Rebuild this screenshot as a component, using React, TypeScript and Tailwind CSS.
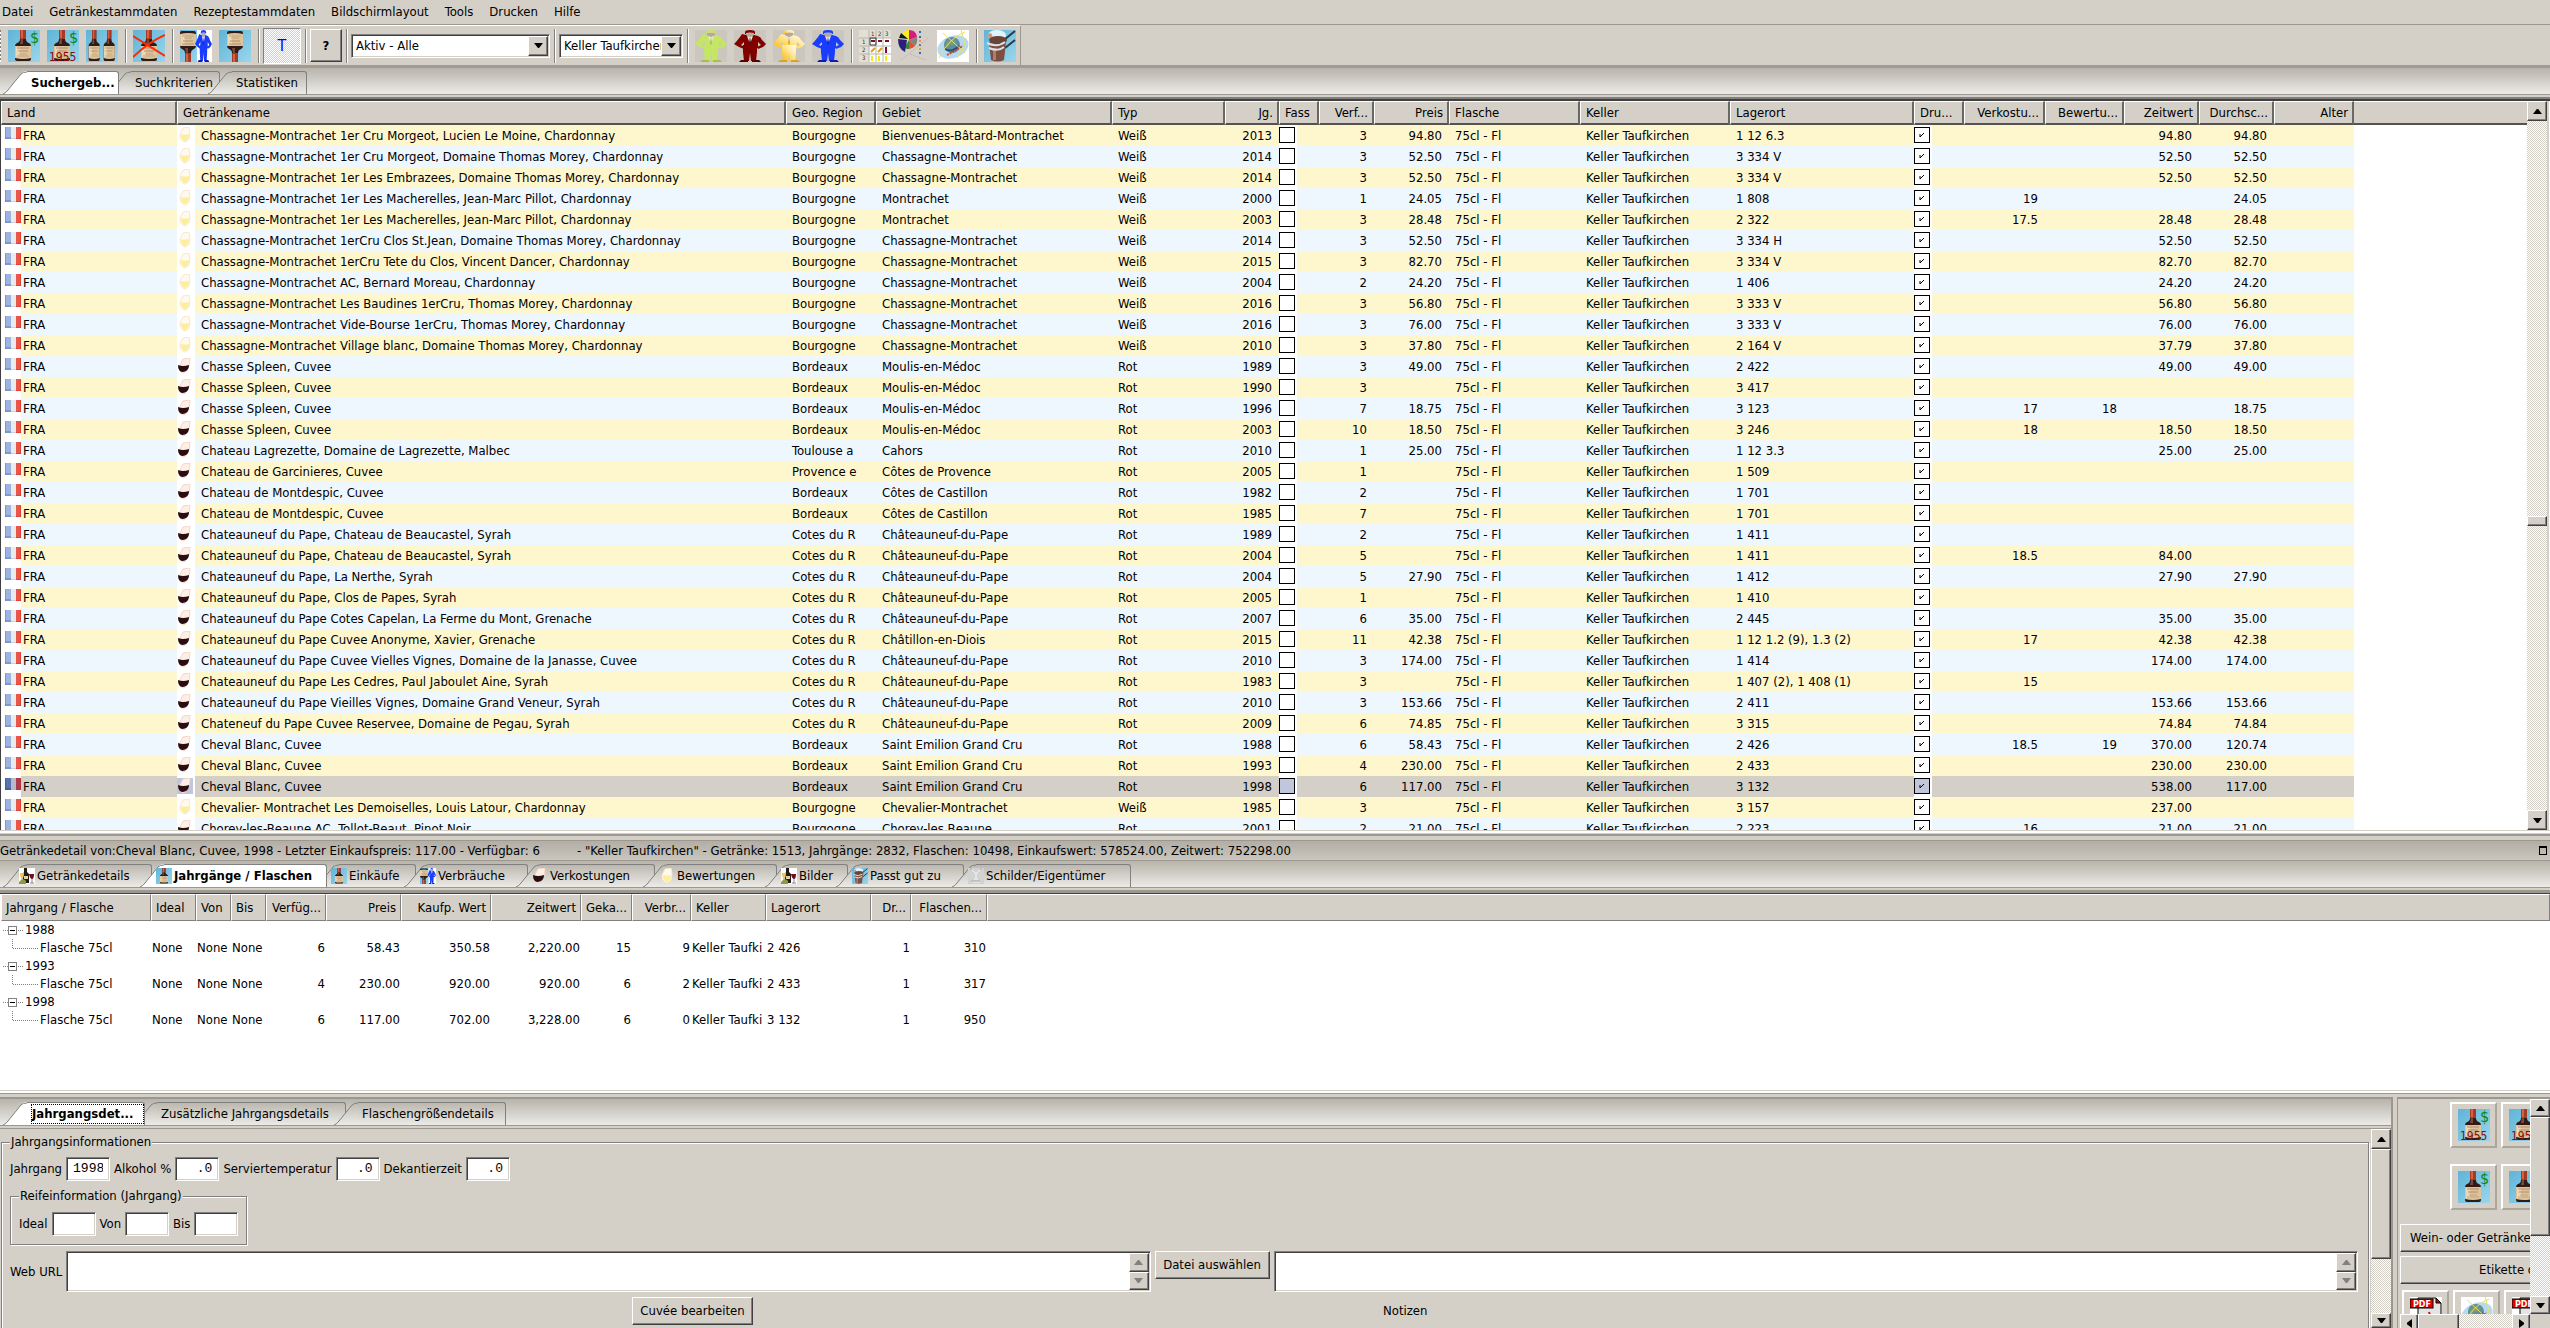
import React from 'react';

const RAISED =
  'bg-[#d4d0c8] border border-t-white border-l-white border-r-[#404040] border-b-[#404040] shadow-[inset_-1px_-1px_0_#808080]';
const SUNKEN =
  'bg-white border border-t-[#808080] border-l-[#808080] border-r-white border-b-white shadow-[inset_1px_1px_0_#404040,inset_-1px_-1px_0_#d4d0c8]';
const DITHER = 'bg-[repeating-conic-gradient(#ffffff_0_25%,#d4d0c8_0_50%)] bg-[length:2px_2px]';
const STRIP = 'bg-gradient-to-b from-[#b8b4ab] to-[#ecebe7]';

/* ---------- Icons ---------- */

type IconProps = { size?: string };

function Bottle({ x = 0, flip = false }: { x?: number; flip?: boolean }) {
  return (
    <g transform={flip ? `translate(${x} 32) scale(1 -1)` : `translate(${x} 0)`}>
      <path d="M13 0h6v9q0 3 3 4 2 1 2 3v13q0 2-2 2H10q-2 0-2-2V16q0-2 2-3 3-1 3-4z" fill="#2f1b17" />
      <path d="M13 0h6v9h-6z" fill="#a53a28" />
      <path d="M14 0h2v8h-2z" fill="#d8603f" />
      <path d="M14 9h2v5h-3z" fill="#7a4636" />
      <path d="M8 16h16v12q-8 2-16 0z" fill="#dcc39b" />
      <path d="M9 17h4v10H9z" fill="#ecd8b4" />
      <path d="M10 18h12M11 21h10" stroke="#b78a6c" />
      <path d="M12 24h8M10 26h12" stroke="#c4a67c" />
    </g>
  );
}

function BottleIcon({
  size = 'size-8',
  dollar,
  year,
  cross,
  flip
}: IconProps & { dollar?: boolean; year?: boolean; cross?: boolean; flip?: boolean }) {
  return (
    <svg className={`${size} block shrink-0`} viewBox="0 0 32 32">
      <rect width="32" height="32" fill="url(#sky)" />
      <Bottle x={dollar ? -1 : 0} flip={flip} />
      {dollar && (
        <text x="22" y="13" fontSize="16" fill="#0a8a24" fontFamily="DejaVu Sans Condensed, sans-serif">$</text>
      )}
      {year && (
        <text x="2" y="31" fontSize="12" fill="#8b0a0a" fontFamily="DejaVu Sans Condensed, sans-serif">1955</text>
      )}
      {cross && <path d="M0 6L32 26M32 5Q16 12 0 27" stroke="#ff2a00" strokeWidth="2" fill="none" />}
    </svg>
  );
}

function TwoBottlesIcon() {
  return (
    <svg className="block size-8 shrink-0" viewBox="0 0 32 32">
      <rect width="32" height="32" fill="url(#sky)" />
      <g transform="translate(-3 0) scale(.7 1)"><Bottle /></g>
      <g transform="translate(12 0) scale(.7 1)"><Bottle /></g>
    </svg>
  );
}

function Man({ color, shade }: { color: string; shade: string }) {
  return (
    <g>
      <path d="M11 2q0-2 5-2t5 2v2h-1V3q-4-1-8 0v1h-1z" fill={color} />
      <path d="M12 3h8v3q-1 2-4 2t-4-2z" fill="#b9a79b" />
      <path d="M8 4l4 1 4 3 4-3 4 1q3 1 4 4l4 4-3 3-5 2-1-2 4-2-3-3v6H10v-6l-3 3 4 2-1 2-5-2-5-3 2-2 4-5z" fill={color} />
      <path d="M9 15h14v7l-1 9h-5l-1-8-1 8h-5l-1-9z" fill={color} />
      <path d="M13 6l3 8 3-8-3 1z" fill="#e8e4dc" />
      <path d="M16 7l1 6-1 2-1-2z" fill={shade} />
      <path d="M7 30h7v2H5zM18 30h7l2 2h-9z" fill={shade} />
    </g>
  );
}

function ManIcon({ color, shade }: { color: string; shade: string }) {
  return (
    <svg className="block size-8 shrink-0" viewBox="0 0 32 32">
      <rect width="32" height="32" fill="#cbc7be" />
      <Man color={color} shade={shade} />
    </svg>
  );
}

function BottleManIcon({ size = 'size-8' }: IconProps) {
  return (
    <svg className={`${size} block shrink-0`} viewBox="0 0 32 32">
      <rect width="32" height="32" fill="#ffffff" />
      <rect width="17" height="32" fill="url(#sky)" />
      <Bottle x={-8} flip />
      <g transform="translate(15 0) scale(.53 1)"><Man color="#1a3cff" shade="#0a1fb0" /></g>
    </svg>
  );
}

function GridIcon() {
  return (
    <svg className="block size-8 shrink-0" viewBox="0 0 32 32">
      <rect width="32" height="32" fill="#ffffff" />
      <path d="M0 0h32v8H0zM0 8h10v24H0z" fill="#e2dfd4" />
      <path d="M10 0v32M17 0v32M24 0v32M0 8h32M0 16h32M0 24h32" stroke="#b8b4a8" />
      <path d="M11 8h6v7h-6z" fill="none" stroke="#333" />
      <path d="M12 11h4M19 11h4M26 11h4" stroke="#7a0f35" strokeWidth="2" />
      <path d="M12 22l4-4M19 22l4-4" stroke="#e79a1c" strokeWidth="2" />
      <path d="M27 17v6" stroke="#7a0f35" strokeWidth="2" />
      <path d="M13 26v5M20 26v5M27 26v5" stroke="#f2e61c" strokeWidth="2" />
      <g fontSize="6" fill="#333" fontFamily="DejaVu Sans Condensed, sans-serif">
        <text x="12" y="6">1</text>
        <text x="19" y="6">2</text>
        <text x="26" y="6">3</text>
        <text x="3" y="14">1</text>
        <text x="3" y="22">2</text>
        <text x="3" y="30">3</text>
      </g>
    </svg>
  );
}

function PieIcon() {
  return (
    <svg className="block size-8 shrink-0" viewBox="0 0 32 32">
      <path d="M11 10L4 4Q7 0 11 0z" fill="#f5ee17" />
      <path d="M11 10V0q7 0 8 7z" fill="#d91a7d" />
      <path d="M11 10l8-3q1 5-2 9z" fill="#8a8078" />
      <path d="M11 10l6 6q-3 3-6 3z" fill="#e2502b" />
      <path d="M11 10v9q-4 0-4-2z" fill="#2a8c3a" />
      <path d="M9 10l-2 12Q0 19 0 9z" fill="#2c1e7a" />
      <path d="M10 9L3 3 1 8z" fill="#15151a" />
      <path d="M22 1v2M22 6v2M22 14v2M22 22v2" stroke="#3768b8" strokeWidth="2" />
      <path d="M22 10v2M22 18v2" stroke="#e2a02b" strokeWidth="2" />
      <path d="M3 30L30 8M12 24l16 6" stroke="#bfb6b6" strokeDasharray="2 1" />
    </svg>
  );
}

function GlobeIcon() {
  return (
    <svg className="block size-8 shrink-0" viewBox="0 0 32 32">
      <rect width="32" height="32" fill="#ffffff" />
      <ellipse cx="16" cy="17" rx="16" ry="11" fill="#b5d9f0" transform="rotate(-20 16 17)" />
      <circle cx="15" cy="15" r="8" fill="#5b8ea0" />
      <path d="M9 12q5-5 11-1-2 5-7 4-2 5-4 1z" fill="#7a9c70" />
      <path d="M8 19q7 4 14-3" stroke="#274f73" strokeWidth="2" fill="none" />
      <path d="M10 25l16-9" stroke="#c0452d" strokeWidth="2" strokeDasharray="2 1" />
      <path d="M2 28Q12 8 28 2M6 3l22 20M24 0l4 14-8 14" stroke="#eadf62" fill="none" />
    </svg>
  );
}

function PotIcon({ size = 'size-8' }: IconProps) {
  return (
    <svg className={`${size} block shrink-0`} viewBox="0 0 32 32">
      <rect width="32" height="32" fill="url(#sky)" />
      <ellipse cx="13" cy="5" rx="9" ry="5" fill="#dff1fa" />
      <path d="M3 4l4-1 4 8-3 2z" fill="#c69a78" />
      <path d="M20 10L31 1M21 18l10-8" stroke="#2c3a45" strokeWidth="2" />
      <path d="M5 12h17l-2 18q-6 3-13 0z" fill="#7d4f42" />
      <path d="M9 18h3v12H9z" fill="#b07d68" />
      <ellipse cx="14" cy="10" rx="9" ry="4" fill="#6b4238" />
      <path d="M3 13q10 5 18-1M5 18q9 4 15-1" stroke="#d9e4ea" strokeWidth="2" fill="none" />
    </svg>
  );
}

function WineSetIcon() {
  return (
    <svg className="block size-4 shrink-0" viewBox="0 0 16 16">
      <rect width="16" height="16" fill="#ffffff" />
      <path d="M5 0h3v4l2 2v9H4V6l1-2z" fill="#201a18" />
      <path d="M5 8h4v3H5z" fill="#e8cfa4" />
      <path d="M1 5h4q0 5-2 5t-2-5z" fill="#e9c94a" />
      <path d="M10 6h5q0 5-2 5t-3-5z" fill="#6d1020" />
      <path d="M13 11v4M3 10v5M11 15h4" stroke="#888" />
      <path d="M0 14q4-5 7-1v3H0z" fill="#8c9c3c" />
    </svg>
  );
}

function GlassIcon({ red }: { red: boolean }) {
  return (
    <svg className="block size-4 shrink-0" viewBox="0 0 16 16">
      {red ? (
        <>
          <path d="M6 1l7-1q0 7-2 10-2 4-4 5-5-1-5-6z" fill="#fdeee6" stroke="#f6d6c6" />
          <path d="M1 7q5 2 11 0 0 4-3 6-2 1-4 1-4-1-4-7z" fill="#2a0d10" />
        </>
      ) : (
        <>
          <path d="M6 1l6-1q2 8 0 12-2 3-5 3-5-3-4-8z" fill="#fffaf0" stroke="#fbe6c4" />
          <path d="M4 7q4 1 8 0 0 6-4 7-4-1-4-7z" fill="#fcef9c" />
        </>
      )}
    </svg>
  );
}

function LabelIcon() {
  return (
    <svg className="block size-4 shrink-0" viewBox="0 0 16 16">
      <rect width="16" height="16" fill="#d2d2d2" />
      <path d="M4 2l4 4 4-4M8 6v5M6 11h4M4 14h8" stroke="#f6f6f6" fill="none" />
      <path d="M2 1h2M12 1h2M3 13h9" stroke="#aaa" />
    </svg>
  );
}

function PdfIcon() {
  return (
    <svg className="block size-8 shrink-0" viewBox="0 0 32 32">
      <rect width="32" height="32" fill="#ffffff" />
      <path d="M8 1h18l5 5v26H8z" fill="#e4e4e4" stroke="#000" />
      <path d="M26 1v5h5z" fill="#e00000" stroke="#000" />
      <path d="M19 15q3 8-5 16M19 20q2 8 10 8" stroke="#e00000" fill="none" strokeWidth="2" />
      <rect x="0" y="2" width="23" height="9" fill="#e00000" stroke="#000" />
      <text x="3" y="10" fontSize="8" fontWeight="bold" fill="#fff" fontFamily="DejaVu Sans, sans-serif">PDF</text>
    </svg>
  );
}

function FlagIcon({ dim }: { dim: boolean }) {
  return (
    <svg className="block h-3 w-4 shrink-0" viewBox="0 0 16 12">
      <rect width="16" height="12" fill={dim ? '#b9bac6' : '#ebebee'} />
      <rect width="6" height="12" fill={dim ? '#5b73ad' : '#9db4e2'} />
      <rect x="11" width="5" height="12" fill={dim ? '#a83a52' : '#e8584a'} />
      <path d="M0 11h6M0 0v12" stroke={dim ? '#3b4f86' : '#5b7cc4'} />
      <path d="M6 12h5" stroke="#b4b4bc" />
      <path d="M11 12h5V0" stroke="#d8261c" fill="none" />
    </svg>
  );
}

/* ---------- Small widgets ---------- */

const ARROWS = {
  up: 'M0 4h7L4 0H3z',
  down: 'M0 0h7L4 4H3z',
  left: 'M5 0v7L1 4V3z',
  right: 'M1 0v7l4-3V3z'
};

function ArrowButton({ dir, className, disabled }: { dir: keyof typeof ARROWS; className: string; disabled?: boolean }) {
  return (
    <button aria-label={dir} className={`flex shrink-0 items-center justify-center ${RAISED} ${className}`}>
      <svg
        className={dir === 'up' || dir === 'down' ? 'h-[5px] w-[9px]' : 'h-[9px] w-[5px]'}
        viewBox={dir === 'up' || dir === 'down' ? '0 0 7 4' : '1 0 4 7'}
        preserveAspectRatio="none"
      >
        <path d={ARROWS[dir]} fill={disabled ? '#808080' : '#000'} />
      </svg>
    </button>
  );
}

function Check({ label, checked, active }: { label: string; checked: boolean; active: boolean }) {
  return (
    <span className="relative flex h-[21px] w-[18px] items-start bg-white pt-[2px]">
      <input
        type="checkbox"
        aria-label={label}
        defaultChecked={checked}
        className={`size-4 appearance-none border border-black ${active ? 'bg-[#c0c6dc]' : 'bg-white'}`}
      />
      {checked && (
        <svg className="pointer-events-none absolute top-[7px] left-[5px] size-[6px]" viewBox="0 0 6 6">
          <path d="M1 2v3l4-4" stroke="#000" fill="none" />
        </svg>
      )}
    </span>
  );
}

type TabItem = { label: string; icon?: React.ReactNode; width: string };

function TabStrip({ tabs, active, focus }: { tabs: TabItem[]; active: number; focus?: boolean }) {
  return (
    <div className={`flex h-[27px] shrink-0 items-end border-b border-[#9c988f] pl-[3px] ${STRIP}`} role="tablist">
      {tabs.map((tab, i) => {
        const on = i === active;
        return (
          <button
            key={tab.label}
            role="tab"
            aria-selected={on}
            className={`relative flex h-[23px] shrink-0 text-left ${i > 0 ? '-ml-3' : ''} ${on ? 'z-10 font-bold' : 'z-0'} ${tab.width}`}
          >
            <svg className="block h-[23px] w-6 shrink-0" viewBox="0 0 24 23">
              <path d="M0 23Q3 22 5 19L18 3Q20 0 24 0V23z" fill={on ? '#ffffff' : 'url(#tab)'} />
              <path d="M0 23Q3 22 5 19L18 3Q20 1 24 1" fill="none" stroke="#808080" />
            </svg>
            <span
              className={`flex h-[23px] min-w-0 flex-1 items-center rounded-tr-[3px] border-t border-r border-[#808080] whitespace-nowrap ${
                on ? 'bg-white' : 'bg-gradient-to-b from-[#bcb8b0] to-[#ecebe7]'
              } ${tab.icon ? 'gap-[2px]' : 'pl-1'}`}
            >
              {tab.icon && <span className="-ml-2">{tab.icon}</span>}
              <span className={focus && on ? 'h-5 flex-1 border border-dotted border-black leading-[18px]' : ''}>{tab.label}</span>
            </span>
          </button>
        );
      })}
    </div>
  );
}

const Sep = () => <span className="h-[34px] w-px shrink-0 bg-[#808080] shadow-[1px_0_0_#fff]" />;

function ToolButton({ label, children }: { label: string; children: React.ReactNode }) {
  return <button aria-label={label} className="shrink-0">{children}</button>;
}

function Combo({ label, value, width }: { label: string; value: string; width: string }) {
  return (
    <span className={`relative flex h-6 shrink-0 ${SUNKEN} ${width}`}>
      <select aria-label={label} className="w-full appearance-none bg-transparent pr-5 pl-1 outline-none">
        <option>{value}</option>
      </select>
      <span className={`pointer-events-none absolute top-px right-px flex size-5 items-center justify-center ${RAISED}`}>
        <svg className="h-[5px] w-[9px]" viewBox="0 0 9 5"><path d="M0 0h9L5 5H4z" /></svg>
      </span>
    </span>
  );
}

/* ---------- Data ---------- */

const COLUMNS = [
  { title: 'Land', width: 'w-[176px]' },
  { title: 'Getränkename', width: 'w-[609px]' },
  { title: 'Geo. Region', width: 'w-[90px]' },
  { title: 'Gebiet', width: 'w-[236px]' },
  { title: 'Typ', width: 'w-[113px]' },
  { title: 'Jg.', width: 'w-[54px]', right: true },
  { title: 'Fass', width: 'w-[40px]' },
  { title: 'Verf...', width: 'w-[55px]', right: true },
  { title: 'Preis', width: 'w-[75px]', right: true },
  { title: 'Flasche', width: 'w-[131px]' },
  { title: 'Keller', width: 'w-[150px]' },
  { title: 'Lagerort', width: 'w-[184px]' },
  { title: 'Dru...', width: 'w-[50px]' },
  { title: 'Verkostu...', width: 'w-[81px]', right: true },
  { title: 'Bewertu...', width: 'w-[79px]', right: true },
  { title: 'Zeitwert', width: 'w-[75px]', right: true },
  { title: 'Durchsc...', width: 'w-[75px]', right: true },
  { title: 'Alter', width: 'w-[80px]', right: true }
];

const CM = 'Chassagne-Montrachet';
const CP = 'Châteauneuf-du-Pape';

// name, region, gebiet, typ, jahrgang, verfügbar, preis, lagerort, verkostung, bewertung, zeitwert, durchschnitt
const WINES: string[][] = [
  ['Chassagne-Montrachet 1er Cru Morgeot, Lucien Le Moine, Chardonnay', 'Bourgogne', 'Bienvenues-Bâtard-Montrachet', 'Weiß', '2013', '3', '94.80', '1 12 6.3', '', '', '94.80', '94.80'],
  ['Chassagne-Montrachet 1er Cru Morgeot, Domaine Thomas Morey, Chardonnay', 'Bourgogne', CM, 'Weiß', '2014', '3', '52.50', '3 334 V', '', '', '52.50', '52.50'],
  ['Chassagne-Montrachet 1er Les Embrazees, Domaine Thomas Morey, Chardonnay', 'Bourgogne', CM, 'Weiß', '2014', '3', '52.50', '3 334 V', '', '', '52.50', '52.50'],
  ['Chassagne-Montrachet 1er Les Macherelles, Jean-Marc Pillot, Chardonnay', 'Bourgogne', 'Montrachet', 'Weiß', '2000', '1', '24.05', '1 808', '19', '', '', '24.05'],
  ['Chassagne-Montrachet 1er Les Macherelles, Jean-Marc Pillot, Chardonnay', 'Bourgogne', 'Montrachet', 'Weiß', '2003', '3', '28.48', '2 322', '17.5', '', '28.48', '28.48'],
  ['Chassagne-Montrachet 1erCru Clos St.Jean, Domaine Thomas Morey, Chardonnay', 'Bourgogne', CM, 'Weiß', '2014', '3', '52.50', '3 334 H', '', '', '52.50', '52.50'],
  ['Chassagne-Montrachet 1erCru Tete du Clos, Vincent Dancer, Chardonnay', 'Bourgogne', CM, 'Weiß', '2015', '3', '82.70', '3 334 V', '', '', '82.70', '82.70'],
  ['Chassagne-Montrachet AC, Bernard Moreau, Chardonnay', 'Bourgogne', CM, 'Weiß', '2004', '2', '24.20', '1 406', '', '', '24.20', '24.20'],
  ['Chassagne-Montrachet Les Baudines 1erCru, Thomas Morey, Chardonnay', 'Bourgogne', CM, 'Weiß', '2016', '3', '56.80', '3 333 V', '', '', '56.80', '56.80'],
  ['Chassagne-Montrachet Vide-Bourse 1erCru, Thomas Morey, Chardonnay', 'Bourgogne', CM, 'Weiß', '2016', '3', '76.00', '3 333 V', '', '', '76.00', '76.00'],
  ['Chassagne-Montrachet Village blanc, Domaine Thomas Morey, Chardonnay', 'Bourgogne', CM, 'Weiß', '2010', '3', '37.80', '2 164 V', '', '', '37.79', '37.80'],
  ['Chasse Spleen, Cuvee', 'Bordeaux', 'Moulis-en-Médoc', 'Rot', '1989', '3', '49.00', '2 422', '', '', '49.00', '49.00'],
  ['Chasse Spleen, Cuvee', 'Bordeaux', 'Moulis-en-Médoc', 'Rot', '1990', '3', '', '3 417', '', '', '', ''],
  ['Chasse Spleen, Cuvee', 'Bordeaux', 'Moulis-en-Médoc', 'Rot', '1996', '7', '18.75', '3 123', '17', '18', '', '18.75'],
  ['Chasse Spleen, Cuvee', 'Bordeaux', 'Moulis-en-Médoc', 'Rot', '2003', '10', '18.50', '3 246', '18', '', '18.50', '18.50'],
  ['Chateau Lagrezette, Domaine de Lagrezette, Malbec', 'Toulouse a', 'Cahors', 'Rot', '2010', '1', '25.00', '1 12 3.3', '', '', '25.00', '25.00'],
  ['Chateau de Garcinieres, Cuvee', 'Provence e', 'Côtes de Provence', 'Rot', '2005', '1', '', '1 509', '', '', '', ''],
  ['Chateau de Montdespic, Cuvee', 'Bordeaux', 'Côtes de Castillon', 'Rot', '1982', '2', '', '1 701', '', '', '', ''],
  ['Chateau de Montdespic, Cuvee', 'Bordeaux', 'Côtes de Castillon', 'Rot', '1985', '7', '', '1 701', '', '', '', ''],
  ['Chateauneuf du Pape, Chateau de Beaucastel, Syrah', 'Cotes du R', CP, 'Rot', '1989', '2', '', '1 411', '', '', '', ''],
  ['Chateauneuf du Pape, Chateau de Beaucastel, Syrah', 'Cotes du R', CP, 'Rot', '2004', '5', '', '1 411', '18.5', '', '84.00', ''],
  ['Chateauneuf du Pape, La Nerthe, Syrah', 'Cotes du R', CP, 'Rot', '2004', '5', '27.90', '1 412', '', '', '27.90', '27.90'],
  ['Chateauneuf du Pape, Clos de Papes, Syrah', 'Cotes du R', CP, 'Rot', '2005', '1', '', '1 410', '', '', '', ''],
  ['Chateauneuf du Pape Cotes Capelan, La Ferme du Mont, Grenache', 'Cotes du R', CP, 'Rot', '2007', '6', '35.00', '2 445', '', '', '35.00', '35.00'],
  ['Chateauneuf du Pape Cuvee Anonyme, Xavier, Grenache', 'Cotes du R', 'Châtillon-en-Diois', 'Rot', '2015', '11', '42.38', '1 12 1.2 (9), 1.3 (2)', '17', '', '42.38', '42.38'],
  ['Chateauneuf du Pape Cuvee Vielles Vignes, Domaine de la Janasse, Cuvee', 'Cotes du R', CP, 'Rot', '2010', '3', '174.00', '1 414', '', '', '174.00', '174.00'],
  ['Chateauneuf du Pape Les Cedres, Paul Jaboulet Aine, Syrah', 'Cotes du R', CP, 'Rot', '1983', '3', '', '1 407 (2), 1 408 (1)', '15', '', '', ''],
  ['Chateauneuf du Pape Vieilles Vignes, Domaine Grand Veneur, Syrah', 'Cotes du R', CP, 'Rot', '2010', '3', '153.66', '2 411', '', '', '153.66', '153.66'],
  ['Chateneuf du Pape Cuvee Reservee, Domaine de Pegau, Syrah', 'Cotes du R', CP, 'Rot', '2009', '6', '74.85', '3 315', '', '', '74.84', '74.84'],
  ['Cheval Blanc, Cuvee', 'Bordeaux', 'Saint Emilion Grand Cru', 'Rot', '1988', '6', '58.43', '2 426', '18.5', '19', '370.00', '120.74'],
  ['Cheval Blanc, Cuvee', 'Bordeaux', 'Saint Emilion Grand Cru', 'Rot', '1993', '4', '230.00', '2 433', '', '', '230.00', '230.00'],
  ['Cheval Blanc, Cuvee', 'Bordeaux', 'Saint Emilion Grand Cru', 'Rot', '1998', '6', '117.00', '3 132', '', '', '538.00', '117.00'],
  ['Chevalier- Montrachet Les Demoiselles, Louis Latour, Chardonnay', 'Bourgogne', 'Chevalier-Montrachet', 'Weiß', '1985', '3', '', '3 157', '', '', '237.00', ''],
  ['Chorey-les-Beaune AC, Tollot-Beaut, Pinot Noir', 'Bourgogne', 'Chorey-les Beaune', 'Rot', '2001', '2', '21.00', '2 223', '16', '', '21.00', '21.00']
];
const SELECTED = 31;

const DETAIL_COLUMNS = [
  { title: 'Jahrgang / Flasche', width: 'w-[150px]' },
  { title: 'Ideal', width: 'w-[45px]' },
  { title: 'Von', width: 'w-[35px]' },
  { title: 'Bis', width: 'w-[35px]' },
  { title: 'Verfüg...', width: 'w-[60px]', right: true },
  { title: 'Preis', width: 'w-[75px]', right: true },
  { title: 'Kaufp. Wert', width: 'w-[90px]', right: true },
  { title: 'Zeitwert', width: 'w-[90px]', right: true },
  { title: 'Geka...', width: 'w-[51px]', right: true },
  { title: 'Verbr...', width: 'w-[59px]', right: true },
  { title: 'Keller', width: 'w-[75px]' },
  { title: 'Lagerort', width: 'w-[105px]' },
  { title: 'Dr...', width: 'w-[40px]', right: true },
  { title: 'Flaschen...', width: 'w-[76px]', right: true }
];

const VINTAGES = [
  { year: '1988', cells: ['None', 'None', 'None', '6', '58.43', '350.58', '2,220.00', '15', '9', 'Keller Taufki', '2 426', '1', '310'] },
  { year: '1993', cells: ['None', 'None', 'None', '4', '230.00', '920.00', '920.00', '6', '2', 'Keller Taufki', '2 433', '1', '317'] },
  { year: '1998', cells: ['None', 'None', 'None', '6', '117.00', '702.00', '3,228.00', '6', '0', 'Keller Taufki', '3 132', '1', '950'] }
];

/* ---------- Sections ---------- */

function MenuBar() {
  const items = ['Datei', 'Getränkestammdaten', 'Rezeptestammdaten', 'Bildschirmlayout', 'Tools', 'Drucken', 'Hilfe'];
  return (
    <nav className="flex h-[25px] shrink-0 items-center gap-4 border-b border-[#9c988f] pb-px pl-[2px]">
      {items.map((item) => (
        <button key={item}>{item}</button>
      ))}
    </nav>
  );
}

function Toolbar() {
  return (
    <div className="flex h-[43px] shrink-0 border-b-[3px] border-[#a09c94]">
      <div className="flex items-center gap-[7px] border-t border-r border-t-white border-r-[#9c988f] pr-1">
        <span className="h-8 w-px bg-[repeating-linear-gradient(#808080_0_2px,#ffffff_2px_4px)]" />
        <ToolButton label="Preis"><BottleIcon dollar /></ToolButton>
        <ToolButton label="Jahrgang"><BottleIcon dollar year /></ToolButton>
        <ToolButton label="Flaschen"><TwoBottlesIcon /></ToolButton>
        <Sep />
        <ToolButton label="Entfernen"><BottleIcon cross /></ToolButton>
        <Sep />
        <ToolButton label="Verbrauch"><BottleManIcon /></ToolButton>
        <ToolButton label="Umdrehen"><BottleIcon flip /></ToolButton>
        <div className="flex items-center gap-1">
          <Sep />
          <button className={`h-9 w-[38px] border border-t-[#808080] border-l-[#808080] border-r-white border-b-white text-base text-[#0000ff] ${DITHER}`}>T</button>
          <Sep />
          <button className={`h-[33px] w-8 font-bold ${RAISED}`}>?</button>
          <Sep />
          <Combo label="Status" value="Aktiv - Alle" width="w-[199px]" />
          <Sep />
          <Combo label="Keller" value="Keller Taufkirchen" width="w-[124px]" />
          <Sep />
        </div>
        <ToolButton label="Grün"><ManIcon color="#c5e565" shade="#a4bf4c" /></ToolButton>
        <ToolButton label="Rot"><ManIcon color="#800000" shade="#560000" /></ToolButton>
        <ToolButton label="Gelb"><ManIcon color="url(#gold)" shade="#d9a520" /></ToolButton>
        <ToolButton label="Blau"><ManIcon color="#1a3cff" shade="#0a1fb0" /></ToolButton>
        <Sep />
        <ToolButton label="Lagerplan"><GridIcon /></ToolButton>
        <ToolButton label="Diagramm"><PieIcon /></ToolButton>
        <ToolButton label="Internet"><GlobeIcon /></ToolButton>
        <Sep />
        <ToolButton label="Rezepte"><PotIcon /></ToolButton>
      </div>
    </div>
  );
}

function WineRow({ wine, index }: { wine: string[]; index: number }) {
  const [name, region, gebiet, typ, jg, verf, preis, lager, verk, bew, zeit, durch] = wine;
  const active = index === SELECTED;
  const bg = active ? 'bg-[#d4d0c8]' : index % 2 === 0 ? 'bg-[#fef7ce]' : 'bg-[#eef6fe]';
  const left = `pl-[6px] ${bg}`;
  const right = `pr-[7px] text-right ${bg}`;
  return (
    <tr className="h-[21px]">
      <td className={bg}>
        <span className="flex h-[21px] items-center gap-[2px]">
          <span className="flex h-[21px] items-start bg-white pt-[2px] pl-1"><FlagIcon dim={active} /></span>
          FRA
        </span>
      </td>
      <td className={bg}>
        <span className="flex h-[21px] items-center gap-[6px]">
          <span className="flex h-[21px] w-[18px] items-start bg-white pt-[2px]">
            <span className={active ? 'bg-[#c0c6dc]' : ''}><GlassIcon red={typ === 'Rot'} /></span>
          </span>
          {name}
        </span>
      </td>
      <td className={left}>{region}</td>
      <td className={left}>{gebiet}</td>
      <td className={left}>{typ}</td>
      <td className={right}>{jg}</td>
      <td className={bg}><Check label="Fass" checked={false} active={active} /></td>
      <td className={right}>{verf}</td>
      <td className={right}>{preis}</td>
      <td className={left}>75cl - Fl</td>
      <td className={left}>Keller Taufkirchen</td>
      <td className={left}>{lager}</td>
      <td className={bg}><Check label="Drucken" checked active={active} /></td>
      <td className={right}>{verk}</td>
      <td className={right}>{bew}</td>
      <td className={right}>{zeit}</td>
      <td className={right}>{durch}</td>
      <td className={bg} />
      <td className="bg-white" />
    </tr>
  );
}

function WineTable() {
  return (
    <div className="flex min-h-0 flex-1 border-l border-[#404040] bg-white">
      <div className="min-w-0 flex-1 overflow-hidden">
        <table className="w-full table-fixed border-separate border-spacing-0 leading-4 whitespace-nowrap">
          <thead>
            <tr className="h-6">
              {COLUMNS.map((c) => (
                <th
                  key={c.title}
                  className={`h-6 overflow-hidden border-t border-r-2 border-b-2 border-l border-t-white border-r-[#6a6863] border-b-[#55534f] border-l-white bg-[#d4d0c8] p-0 font-normal ${c.width} ${
                    c.right ? 'pr-1 text-right' : 'pl-[5px] text-left'
                  }`}
                >
                  {c.title}
                </th>
              ))}
              <th className="border-t border-b-2 border-t-white border-b-[#55534f] bg-[#d4d0c8]" />
            </tr>
          </thead>
          <tbody>
            {WINES.map((wine, i) => (
              <WineRow key={i} wine={wine} index={i} />
            ))}
          </tbody>
        </table>
      </div>
      <div className={`flex w-5 shrink-0 flex-col ${DITHER}`}>
        <ArrowButton dir="up" className="h-5 w-5" />
        <div className="flex-1" />
        <div className={`h-[10px] ${RAISED}`} />
        <div className="h-[284px]" />
        <ArrowButton dir="down" className="h-5 w-5" />
      </div>
      <div className="w-[3px] border-r border-white bg-[#d4d0c8]" />
    </div>
  );
}

function DetailTable() {
  return (
    <div className="h-[197px] shrink-0 overflow-hidden border-b border-[#d4d0c8] bg-white pl-px">
      <table className="w-full table-fixed border-separate border-spacing-0 leading-4 whitespace-nowrap">
        <thead>
          <tr>
            {DETAIL_COLUMNS.map((c) => (
              <th
                key={c.title}
                className={`h-[27px] overflow-hidden border border-t-white border-r-[#808080] border-b-[#808080] border-l-white bg-[#d4d0c8] p-0 font-normal ${c.width} ${
                  c.right ? 'pr-1 text-right' : 'pl-1 text-left'
                }`}
              >
                {c.title}
              </th>
            ))}
            <th className="border border-t-white border-r-[#808080] border-b-[#808080] border-l-white bg-[#d4d0c8]" />
          </tr>
        </thead>
        <tbody>
          {VINTAGES.map((v) => (
            <React.Fragment key={v.year}>
              <tr className="h-[18px]">
                <td className="h-[18px]" colSpan={15}>
                  <span className="flex items-center gap-[2px] pl-[2px]">
                    <svg className="h-[9px] w-5" viewBox="0 0 20 9">
                      <path d="M0 4.5h5M15 4.5h5" stroke="#808080" strokeDasharray="1 1" />
                      <rect x="5.5" y=".5" width="8" height="8" fill="#fff" stroke="#808080" />
                      <path d="M7 4.5h5" stroke="#000" />
                    </svg>
                    {v.year}
                  </span>
                </td>
              </tr>
              <tr className="h-[18px]">
                <td className="h-[18px]">
                  <span className="flex h-[18px] items-center gap-[2px] pl-[11px]">
                    <svg className="h-[18px] w-[26px]" viewBox="0 0 26 18">
                      <path d="M.5 0v9M1 9.5h25" stroke="#808080" strokeDasharray="1 1" fill="none" />
                    </svg>
                    Flasche 75cl
                  </span>
                </td>
                {v.cells.map((cell, i) => (
                  <td key={i} className={`overflow-hidden px-px ${DETAIL_COLUMNS[i + 1].right ? 'text-right' : ''}`}>
                    {cell}
                  </td>
                ))}
                <td />
              </tr>
            </React.Fragment>
          ))}
        </tbody>
      </table>
    </div>
  );
}

function Field({ label, value = '', labelClass = '' }: { label: string; value?: string; labelClass?: string }) {
  return (
    <label className="flex items-center gap-1">
      <span className={labelClass}>{label}</span>
      <input
        defaultValue={value}
        className={`h-6 w-11 px-[6px] pb-[2px] text-right font-['Liberation_Mono',monospace] text-[13px] outline-none ${SUNKEN}`}
      />
    </label>
  );
}

function UrlBox({ label }: { label: string }) {
  return (
    <div className={`flex h-[41px] flex-1 p-px ${SUNKEN}`}>
      <textarea aria-label={label} className="min-w-0 flex-1 resize-none outline-none" />
      <div className="flex w-5 flex-col">
        <ArrowButton dir="up" className="w-5 flex-1" disabled />
        <ArrowButton dir="down" className="w-5 flex-1" disabled />
      </div>
    </div>
  );
}

const GROUP = 'min-w-0 border border-[#808080] shadow-[1px_1px_0_#fff,inset_1px_1px_0_#fff]';

function VintageForm() {
  return (
    <div className="flex min-h-0 flex-1">
      <div className="min-w-0 flex-1 overflow-hidden pt-[5px] pr-[2px] pl-px">
        <fieldset className={`pr-[10px] pb-10 pl-2 ${GROUP}`}>
          <legend className="bg-[#d4d0c8] px-px leading-4">Jahrgangsinformationen</legend>
          <div className="flex gap-1 pt-[7px]">
            <Field label="Jahrgang" value="1998" />
            <Field label="Alkohol %" value=".0" />
            <Field label="Serviertemperatur" value=".0" />
            <Field label="Dekantierzeit" value=".0" />
          </div>
          <fieldset className={`mt-[7px] w-fit px-2 pb-2 ${GROUP}`}>
            <legend className="bg-[#d4d0c8] px-px leading-4">Reifeinformation (Jahrgang)</legend>
            <div className="flex gap-1 pt-2">
              <Field label="Ideal" />
              <Field label="Von" />
              <Field label="Bis" />
            </div>
          </fieldset>
          <div className="mt-[6px] flex items-start gap-1">
            <span className="flex h-[41px] w-[52px] shrink-0 items-center whitespace-nowrap">Web URL</span>
            <UrlBox label="Web URL" />
            <button className={`h-7 w-[115px] shrink-0 whitespace-nowrap ${RAISED}`}>Datei auswählen</button>
            <UrlBox label="Datei" />
          </div>
          <div className="mt-[5px] flex items-center">
            <div className="flex-[7] text-center">
              <button className={`h-7 w-[121px] whitespace-nowrap ${RAISED}`}>Cuvée bearbeiten</button>
            </div>
            <div className="flex-[5] pl-2">Notizen</div>
          </div>
        </fieldset>
      </div>
      <div className={`flex w-5 shrink-0 flex-col ${DITHER}`}>
        <ArrowButton dir="up" className="h-5 w-5" />
        <div className={`h-[110px] ${RAISED}`} />
        <div className="flex-1" />
        <ArrowButton dir="down" className="h-[15px] w-5" />
      </div>
    </div>
  );
}

function IconPush({ label, children }: { label: string; children: React.ReactNode }) {
  return (
    <button
      aria-label={label}
      className="flex h-[46px] w-[47px] shrink-0 items-center justify-center border-2 border-t-white border-r-[#aca899] border-b-[#aca899] border-l-white"
    >
      {children}
    </button>
  );
}

function LabelPanel() {
  return (
    <div className="flex w-[153px] shrink-0 flex-col border-t-2 border-l border-[#9c988f]">
      <div className="flex min-h-0 flex-1">
        <div className="flex min-w-0 flex-1 flex-col overflow-hidden pt-[3px] pl-[2px]">
          <div className="flex gap-1 pl-[50px]">
            <IconPush label="Jahrgang 1"><BottleIcon dollar year /></IconPush>
            <IconPush label="Jahrgang 2"><BottleIcon dollar year /></IconPush>
          </div>
          <div className="mt-4 flex gap-1 pl-[50px]">
            <IconPush label="Flasche 1"><BottleIcon dollar /></IconPush>
            <IconPush label="Flasche 2"><BottleIcon dollar /></IconPush>
          </div>
          <button className={`mt-[14px] h-7 w-[300px] shrink-0 pl-[9px] text-left whitespace-nowrap ${RAISED}`}>Wein- oder Getränke</button>
          <button className={`mt-1 h-7 w-[300px] shrink-0 pl-[78px] text-left whitespace-nowrap ${RAISED}`}>Etikette d</button>
          <div className="mt-[6px] flex gap-1 pl-[2px]">
            <IconPush label="PDF"><PdfIcon /></IconPush>
            <IconPush label="Internet"><GlobeIcon /></IconPush>
            <IconPush label="PDF 2"><PdfIcon /></IconPush>
          </div>
        </div>
        <div className={`flex w-5 shrink-0 flex-col ${DITHER}`}>
          <ArrowButton dir="up" className="h-[18px] w-5" />
          <div className={`h-[119px] ${RAISED}`} />
          <div className="flex-1" />
          <ArrowButton dir="down" className="h-[18px] w-5" />
        </div>
      </div>
      <div className="flex h-[14px] shrink-0 overflow-hidden pl-[2px]">
        <div className={`flex flex-1 ${DITHER}`}>
          <ArrowButton dir="left" className="h-[18px] w-[18px]" />
          <div className={`h-[18px] w-[41px] ${RAISED}`} />
          <div className="flex-1" />
          <ArrowButton dir="right" className="h-[18px] w-[18px]" />
        </div>
        <div className="w-5" />
      </div>
    </div>
  );
}

export default function App() {
  return (
    <div className="flex h-screen flex-col overflow-hidden bg-[#d4d0c8] font-['DejaVu_Sans_Condensed','Noto_Sans',sans-serif] text-[13px] leading-4 text-black">
      {/* Shared gradients */}
      <svg className="absolute h-0 w-0">
        <defs>
          <linearGradient id="sky" x1="0" y1="0" x2="1" y2="1">
            <stop offset="0" stopColor="#5fb4d8" />
            <stop offset="1" stopColor="#9ad6ec" />
          </linearGradient>
          <linearGradient id="tab" x1="0" y1="0" x2="0" y2="1">
            <stop offset="0" stopColor="#bcb8b0" />
            <stop offset="1" stopColor="#ecebe7" />
          </linearGradient>
          <linearGradient id="gold" x1="0" y1="1" x2="1" y2="0">
            <stop offset="0" stopColor="#ffb800" />
            <stop offset=".6" stopColor="#ffe9a0" />
            <stop offset="1" stopColor="#ffffff" />
          </linearGradient>
        </defs>
      </svg>

      <MenuBar />
      <Toolbar />

      {/* Search results */}
      <TabStrip
        active={0}
        tabs={[
          { label: 'Suchergeb...', width: 'w-[116px]' },
          { label: 'Suchkriterien', width: 'w-[113px]' },
          { label: 'Statistiken', width: 'w-[99px]' }
        ]}
      />
      <div className="h-[6px] shrink-0 border-t-2 border-b-2 border-t-[#d4d0c8] border-b-[#404040] bg-[#808080]" />
      <WineTable />
      <div className="h-[10px] shrink-0 bg-[linear-gradient(#d4d0c8_0_1px,#ffffff_1px_3px,#d4d0c8_3px_4px,#9c988f_4px_6px,#d4d0c8_6px)]" />

      {/* Detail header */}
      <div className="flex h-[21px] shrink-0 items-center justify-between border-t border-b border-[#9c988f] bg-gradient-to-b from-[#b2aea5] to-[#cac6be] whitespace-pre">
        <span>
          Getränkedetail von:Cheval Blanc, Cuvee, 1998 - Letzter Einkaufspreis: 117.00 - Verfügbar: 6{'          '}- "Keller Taufkirchen" - Getränke: 1513, Jahrgänge: 2832, Flaschen: 10498, Einkaufswert: 578524.00, Zeitwert: 752298.00
        </span>
        <button aria-label="Maximieren" className="mr-[3px] h-[9px] w-2 border border-t-2 border-black" />
      </div>
      <TabStrip
        active={1}
        tabs={[
          { label: 'Getränkedetails', icon: <WineSetIcon />, width: 'w-[149px]' },
          { label: 'Jahrgänge / Flaschen', icon: <BottleIcon size="size-4" />, width: 'w-[187px]' },
          { label: 'Einkäufe', icon: <BottleIcon size="size-4" />, width: 'w-[101px]' },
          { label: 'Verbräuche', icon: <BottleManIcon size="size-4" />, width: 'w-[124px]' },
          { label: 'Verkostungen', icon: <GlassIcon red />, width: 'w-[139px]' },
          { label: 'Bewertungen', icon: <GlassIcon red={false} />, width: 'w-[134px]' },
          { label: 'Bilder', icon: <WineSetIcon />, width: 'w-[83px]' },
          { label: 'Passt gut zu', icon: <PotIcon size="size-4" />, width: 'w-[128px]' },
          { label: 'Schilder/Eigentümer', icon: <LabelIcon />, width: 'w-[179px]' }
        ]}
      />
      <div className="h-[6px] shrink-0 border-t-2 border-b border-t-[#d4d0c8] border-b-[#404040] bg-[#9c988f]" />
      <DetailTable />
      <div className="h-[6px] shrink-0 border-t-2 border-t-white shadow-[inset_0_1px_0_#9c988f]" />

      {/* Vintage form and label buttons */}
      <div className="flex h-[231px] shrink-0 gap-1">
        <div className="flex min-w-0 flex-1 flex-col border-t-2 border-r-2 border-[#9c988f]">
          <TabStrip
            active={0}
            focus
            tabs={[
              { label: 'Jahrgangsdet...', width: 'w-[142px]' },
              { label: 'Zusätzliche Jahrgangsdetails', width: 'w-[213px]' },
              { label: 'Flaschengrößendetails', width: 'w-[172px]' }
            ]}
          />
          <div className="h-[3px] shrink-0 border-b border-[#9c988f]" />
          <VintageForm />
        </div>
        <LabelPanel />
      </div>
    </div>
  );
}
